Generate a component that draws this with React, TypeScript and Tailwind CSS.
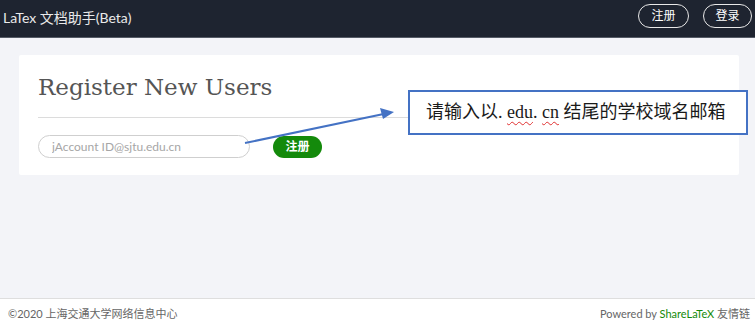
export default function App() {
  return (
    <div className="relative flex h-[330px] w-[755px] flex-col bg-[#f3f4f8] font-['Lato','Noto_Sans_CJK_SC',sans-serif]">
      <header className="flex h-[38px] items-center justify-between border-b border-[#555b66] bg-[#1e2430] pl-[3px] pr-[3px]">
        <span className="pb-[2px] text-[14px] text-[#eaeaea]">LaTex 文档助手(Beta)</span>
        <div className="flex gap-[14px] pb-[5px]">
          <button className="h-[24px] w-[51px] rounded-full border-[1.5px] border-[#e8e8e8] text-[12px] text-white">注册</button>
          <button className="h-[24px] w-[49px] rounded-full border-[1.5px] border-[#e8e8e8] text-[12px] text-white">登录</button>
        </div>
      </header>

      <main className="flex-1 px-[19px] pt-[17px]">
        <div className="w-[720px] rounded-[2px] bg-white px-[19px] pb-[17px] pt-[16px]">
          <h1 className="font-['DejaVu_Serif',serif] text-[23px] leading-[32px] text-[#555]">Register New Users</h1>
          <div className="mt-[14px] h-px bg-[#dcdcdc]" />
          <div className="mt-[17px] flex items-center gap-[23px]">
            <input
              placeholder="jAccount ID@sjtu.edu.cn"
              className="h-[23px] w-[212px] rounded-full border border-[#cfcfcf] px-[13px] text-[12px] text-[#555] outline-none placeholder:text-[#a6a6a6]"
            />
            <button className="h-[22px] w-[49px] rounded-full bg-[#148a0b] text-[12px] font-bold text-white">注册</button>
          </div>
        </div>
      </main>

      <footer className="flex h-[32px] items-center justify-between border-t border-[#dedede] bg-white pl-[8px] pr-[5px] text-[11px] text-[#666]">
        <span>©2020 上海交通大学网络信息中心</span>
        <span>
          Powered by <span className="text-[#138a07]">ShareLaTeX</span> 友情链
        </span>
      </footer>

      <svg className="absolute left-0 top-0" width="755" height="330">
        <line x1="245" y1="143" x2="386" y2="113.5" stroke="#4472c4" strokeWidth="2" />
        <polygon points="394,112 380,108 383,119" fill="#4472c4" />
      </svg>

      <div className="absolute left-[408px] top-[90px] flex h-[45px] w-[340px] items-center whitespace-pre border-2 border-[#4472c4] bg-white pl-[16px] font-['Liberation_Serif','Noto_Sans_CJK_SC',serif] text-[18px] text-[#1a1a1a]">
        请输入以. <span className="underline decoration-[#e03030] decoration-wavy decoration-[1px] underline-offset-[3px]">edu</span>. <span className="underline decoration-[#e03030] decoration-wavy decoration-[1px] underline-offset-[3px]">cn</span> 结尾的学校域名邮箱
      </div>
    </div>
  )
}
